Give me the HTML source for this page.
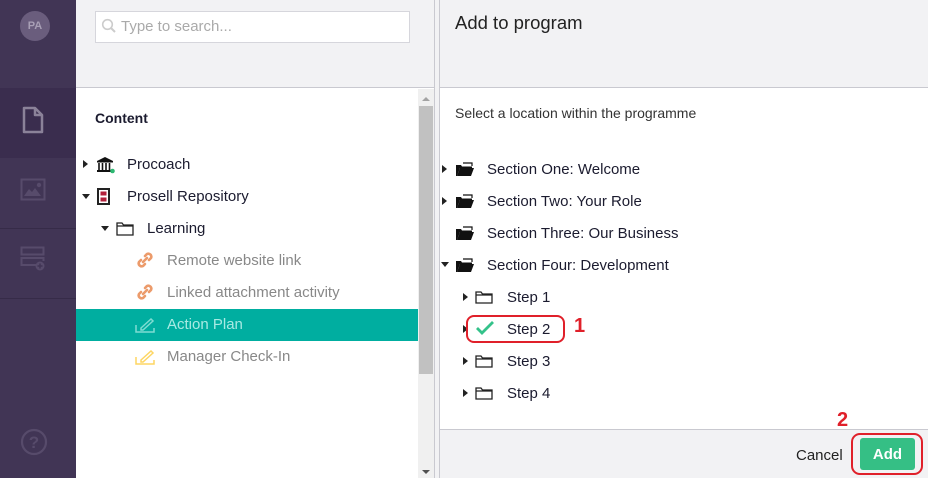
<!DOCTYPE html>
<html><head><style>
*{margin:0;padding:0;box-sizing:border-box}
body{width:928px;height:478px;overflow:hidden;font-family:"Liberation Sans",sans-serif;background:#fff;position:relative;color:#1b1b2f}
.abs{position:absolute}
.sb{left:0;top:0;width:76px;height:478px;background:#413555}
.t{position:absolute;font-size:15px;white-space:nowrap;margin-top:1px}
.tri{position:absolute;width:0;height:0}
.r{border-top:4px solid transparent;border-bottom:4px solid transparent;border-left:5px solid #222}
.d{border-left:4px solid transparent;border-right:4px solid transparent;border-top:5px solid #222}
</style></head><body>
<div class="abs sb"></div>
<div class="abs" style="left:0;top:88px;width:76px;height:70px;background:#3a2d4e"></div>
<div class="abs" style="left:0;top:228px;width:76px;height:1px;background:#362b48"></div>
<div class="abs" style="left:0;top:298px;width:76px;height:1px;background:#362b48"></div>
<div class="abs" style="left:20px;top:11px;width:30px;height:30px;border-radius:50%;background:#6a5d7d;color:#a89fb5;font-size:11px;font-weight:bold;text-align:center;line-height:30px">PA</div>
<svg class="abs" style="left:22px;top:106px" width="22" height="28" viewBox="0 0 22 28"><path d="M2 2h11l7 7v17H2z M13 2v7h7" fill="none" stroke="#8b8299" stroke-width="2.5" stroke-linejoin="round"/></svg>
<svg class="abs" style="left:20px;top:178px" width="26" height="24" viewBox="0 0 26 24"><rect x="1.5" y="1.5" width="23" height="20" fill="none" stroke="#574b6b" stroke-width="2"/><path d="M4 18l5-7 3 3 3-4 6 8z" fill="#574b6b"/><circle cx="19" cy="7" r="2.2" fill="#574b6b"/></svg>
<svg class="abs" style="left:20px;top:246px" width="26" height="26" viewBox="0 0 26 26"><rect x="1.5" y="1.5" width="22" height="7" fill="none" stroke="#574b6b" stroke-width="2"/><path d="M16 19H1.5v-7h22v3" fill="none" stroke="#574b6b" stroke-width="2"/><circle cx="20" cy="20" r="4.5" fill="#574b6b"/><path d="M20 17.5v5M17.5 20h5" stroke="#413555" stroke-width="1.5"/></svg>
<svg class="abs" style="left:20px;top:428px" width="28" height="28" viewBox="0 0 28 28"><circle cx="14" cy="14" r="12" fill="none" stroke="#574b6b" stroke-width="2.2"/><text x="14" y="20" text-anchor="middle" font-size="17" font-weight="bold" fill="#574b6b" font-family="Liberation Sans">?</text></svg>

<div class="abs" style="left:76px;top:0;width:358px;height:88px;background:#f2f2f4;border-bottom:1px solid #c9c9d0"></div>
<div class="abs" style="left:95px;top:11px;width:315px;height:32px;background:#fff;border:1px solid #d6d6dc"></div>
<svg class="abs" style="left:101px;top:18px" width="16" height="16" viewBox="0 0 16 16"><circle cx="6.5" cy="6.5" r="4.8" fill="none" stroke="#ccc" stroke-width="1.6"/><path d="M10 10l4 4" stroke="#ccc" stroke-width="2"/></svg>
<div class="t" style="left:121px;top:17px;color:#aaa">Type to search...</div>
<div class="abs" style="left:434px;top:0;width:1px;height:478px;background:#c9c9d0"></div>
<div class="abs" style="left:435px;top:0;width:4px;height:478px;background:#f2f2f4"></div>
<div class="abs" style="left:439px;top:0;width:1px;height:478px;background:#c9c9d0"></div>
<div class="abs" style="left:418px;top:89px;width:16px;height:389px;background:#f0f0f0"></div>
<div class="abs" style="left:419px;top:106px;width:14px;height:268px;background:#c1c1c1"></div>
<div class="tri" style="left:422px;top:97px;border-left:4px solid transparent;border-right:4px solid transparent;border-bottom:4px solid #a3a3a3"></div>
<div class="tri" style="left:422px;top:470px;border-left:4px solid transparent;border-right:4px solid transparent;border-top:4px solid #505050"></div>

<div class="t" style="left:95px;top:109px;font-weight:bold;font-size:14px">Content</div>
<div class="tri r" style="left:83px;top:160px"></div>
<svg class="abs" style="left:96px;top:156px" width="20" height="18" viewBox="0 0 20 18"><path d="M1 5L9 1l8 4z" fill="#111"/><rect x="1" y="5" width="16" height="1.5" fill="#111"/><path d="M3 7v7M6.5 7v7M10 7v7M13.5 7v7" stroke="#111" stroke-width="1.6"/><rect x="1" y="14" width="16" height="2" fill="#111"/><circle cx="16.5" cy="15" r="2.3" fill="#2eb872"/></svg>
<div class="t" style="left:127px;top:155px">Procoach</div>
<div class="tri d" style="left:82px;top:194px"></div>
<svg class="abs" style="left:97px;top:188px" width="14" height="17" viewBox="0 0 14 17"><rect x="1" y="1" width="11" height="15" fill="none" stroke="#222" stroke-width="2"/><rect x="3.5" y="3.5" width="6" height="4" fill="#b3203b"/><rect x="3.5" y="9.5" width="6" height="4" fill="#b3203b"/></svg>
<div class="t" style="left:127px;top:187px">Prosell Repository</div>
<div class="tri d" style="left:101px;top:226px"></div>
<svg class="abs" style="left:116px;top:221px" width="18" height="15" viewBox="0 0 18 15"><path d="M1 2h5l1.5 2H17v10H1z M1 5h16" fill="none" stroke="#222" stroke-width="1.3"/></svg>
<div class="t" style="left:147px;top:219px">Learning</div>
<svg class="abs" style="left:136px;top:251px" width="18" height="18" viewBox="0 0 18 18"><g fill="none" stroke="#ec9b6b" stroke-width="2.6" stroke-linecap="round"><path d="M9 5l2-2a3 3 0 014 4l-2 2"/><path d="M9 13l-2 2a3 3 0 01-4-4l2-2"/><path d="M7 11l4-4"/></g></svg>
<div class="t" style="left:167px;top:251px;color:#888">Remote website link</div>
<svg class="abs" style="left:136px;top:283px" width="18" height="18" viewBox="0 0 18 18"><g fill="none" stroke="#ec9b6b" stroke-width="2.6" stroke-linecap="round"><path d="M9 5l2-2a3 3 0 014 4l-2 2"/><path d="M9 13l-2 2a3 3 0 01-4-4l2-2"/><path d="M7 11l4-4"/></g></svg>
<div class="t" style="left:167px;top:283px;color:#888">Linked attachment activity</div>
<div class="abs" style="left:76px;top:309px;width:342px;height:32px;background:#00aea0"></div>
<svg class="abs" style="left:135px;top:317px" width="20" height="16" viewBox="0 0 20 16"><path d="M1 8v7h18v-4" fill="none" stroke="#7fdcd2" stroke-width="1.5"/><path d="M6 11l10-9 2 2-10 9H6z" fill="none" stroke="#7fdcd2" stroke-width="1.5"/></svg>
<div class="t" style="left:167px;top:315px;color:#a8eae3">Action Plan</div>
<svg class="abs" style="left:135px;top:349px" width="20" height="16" viewBox="0 0 20 16"><path d="M1 8v7h18v-4" fill="none" stroke="#fdd663" stroke-width="1.5"/><path d="M6 11l10-9 2 2-10 9H6z" fill="none" stroke="#fdd663" stroke-width="1.5"/></svg>
<div class="t" style="left:167px;top:347px;color:#888">Manager Check-In</div>

<div class="abs" style="left:440px;top:0;width:488px;height:88px;background:#f2f2f4;border-bottom:1px solid #c9c9d0"></div>
<div class="t" style="left:455px;top:11px;font-size:18.5px;color:#222">Add to program</div>
<div class="t" style="left:455px;top:104px;font-size:14px;color:#333">Select a location within the programme</div>
<div class="abs" style="left:440px;top:429px;width:488px;height:49px;background:#f2f2f4;border-top:1px solid #c9c9d0"></div>

<div class="tri r" style="left:442px;top:165px"></div>
<div class="tri r" style="left:442px;top:197px"></div>
<div class="tri d" style="left:441px;top:262px"></div>
<svg class="abs" style="left:456px;top:162px" width="18" height="14" viewBox="0 0 18 14"><path d="M0 3h5l1 1.5h10V6H4L1 14H0z" fill="#111"/><path d="M4 6h14l-3 8H1z" fill="#111"/><path d="M7 1h9v3" fill="none" stroke="#111" stroke-width="1.2"/></svg>
<svg class="abs" style="left:456px;top:194px" width="18" height="14" viewBox="0 0 18 14"><path d="M0 3h5l1 1.5h10V6H4L1 14H0z" fill="#111"/><path d="M4 6h14l-3 8H1z" fill="#111"/><path d="M7 1h9v3" fill="none" stroke="#111" stroke-width="1.2"/></svg>
<svg class="abs" style="left:456px;top:226px" width="18" height="14" viewBox="0 0 18 14"><path d="M0 3h5l1 1.5h10V6H4L1 14H0z" fill="#111"/><path d="M4 6h14l-3 8H1z" fill="#111"/><path d="M7 1h9v3" fill="none" stroke="#111" stroke-width="1.2"/></svg>
<svg class="abs" style="left:456px;top:258px" width="18" height="14" viewBox="0 0 18 14"><path d="M0 3h5l1 1.5h10V6H4L1 14H0z" fill="#111"/><path d="M4 6h14l-3 8H1z" fill="#111"/><path d="M7 1h9v3" fill="none" stroke="#111" stroke-width="1.2"/></svg>
<div class="t" style="left:487px;top:160px">Section One: Welcome</div>
<div class="t" style="left:487px;top:192px">Section Two: Your Role</div>
<div class="t" style="left:487px;top:224px">Section Three: Our Business</div>
<div class="t" style="left:487px;top:256px">Section Four: Development</div>

<div class="tri r" style="left:463px;top:293px"></div>
<div class="tri r" style="left:463px;top:325px"></div>
<div class="tri r" style="left:463px;top:357px"></div>
<div class="tri r" style="left:463px;top:389px"></div>
<svg class="abs" style="left:475px;top:290px" width="18" height="14" viewBox="0 0 18 14"><path d="M1 2h5l1.5 2H17v9H1z M1 5h16" fill="none" stroke="#222" stroke-width="1.3"/></svg>
<svg class="abs" style="left:475px;top:354px" width="18" height="14" viewBox="0 0 18 14"><path d="M1 2h5l1.5 2H17v9H1z M1 5h16" fill="none" stroke="#222" stroke-width="1.3"/></svg>
<svg class="abs" style="left:475px;top:386px" width="18" height="14" viewBox="0 0 18 14"><path d="M1 2h5l1.5 2H17v9H1z M1 5h16" fill="none" stroke="#222" stroke-width="1.3"/></svg>
<svg class="abs" style="left:475px;top:320px" width="20" height="16" viewBox="0 0 20 16"><path d="M2 8l5 5L18 2" fill="none" stroke="#34c28a" stroke-width="2.8"/></svg>
<div class="t" style="left:507px;top:288px">Step 1</div>
<div class="t" style="left:507px;top:320px">Step 2</div>
<div class="t" style="left:507px;top:352px">Step 3</div>
<div class="t" style="left:507px;top:384px">Step 4</div>
<div class="abs" style="left:466px;top:315px;width:99px;height:28px;border:2px solid #e0202a;border-radius:8px"></div>
<div class="t" style="left:574px;top:314px;font-size:20px;font-weight:bold;color:#e0202a">1</div>

<div class="t" style="left:796px;top:446px;font-size:15px;color:#222">Cancel</div>
<div class="t" style="left:837px;top:408px;font-size:20px;font-weight:bold;color:#e0202a">2</div>
<div class="abs" style="left:851px;top:433px;width:72px;height:42px;border:2px solid #e0202a;border-radius:9px"></div>
<div class="abs" style="left:860px;top:438px;width:55px;height:32px;background:#35bf85;border-radius:3px;color:#fff;font-weight:bold;font-size:15px;text-align:center;line-height:33px">Add</div>
</body></html>
